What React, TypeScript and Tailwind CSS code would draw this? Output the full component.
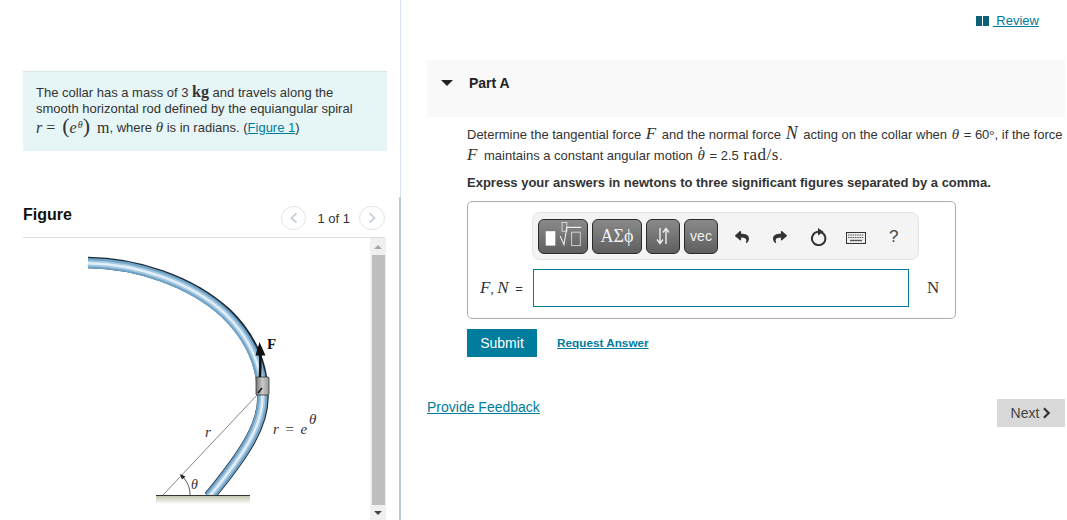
import React from 'react'
import { FaReply, FaShare } from 'react-icons/fa'

const serif = "font-['Liberation_Serif',serif]"

const Th = () => <i className={`${serif} text-[15px] mx-[1px]`}>θ</i>

const Collar = () => (
  <svg viewBox="23 238 347 282" width="347" height="282" className="block shrink-0">
    <defs>
      <clipPath id="rodClip">
        <rect x="80" y="240" width="220" height="255" />
      </clipPath>
      <linearGradient id="collarFill" x1="0" y1="0" x2="1" y2="0">
        <stop offset="0" stopColor="#777" />
        <stop offset="0.5" stopColor="#c9c9c9" />
        <stop offset="1" stopColor="#999" />
      </linearGradient>
      <linearGradient id="groundFill" x1="0" y1="0" x2="0" y2="1">
        <stop offset="0" stopColor="#c3c7ae" />
        <stop offset="1" stopColor="#ffffff" />
      </linearGradient>
    </defs>
    <rect x="156" y="496" width="94" height="8" fill="url(#groundFill)" />
    <g clipPath="url(#rodClip)" fill="none">
      <path d="M88 262.5C135 263 190 280 226 313C250 336 263 365 263 397C263 425 246 452 209 497" stroke="#1c2a36" strokeWidth="11.5" />
      <path d="M88 263.2C135 263.7 190 281 225.5 314C249 337 262.5 366 262.5 397C262.5 425 246 452 209 497" stroke="#6fa3c8" strokeWidth="10.2" />
      <path d="M88 263.2C135 263.7 190 281 225.5 314C249 337 262.5 366 262.5 397C262.5 425 246 452 209 497" stroke="#a5c8e0" strokeWidth="6" />
      <path d="M88 263.2C135 263.7 190 281 225.5 314C249 337 262.5 366 262.5 397C262.5 425 246 452 209 497" stroke="#e2eff8" strokeWidth="2.4" />
    </g>
    <line x1="163" y1="495" x2="259" y2="393" stroke="#666" strokeWidth="0.8" />
    <line x1="156" y1="495.5" x2="250" y2="495.5" stroke="#333" strokeWidth="1.2" />
    <rect x="256" y="377" width="13" height="18" rx="1" fill="url(#collarFill)" stroke="#333" strokeWidth="0.8" />
    <line x1="258" y1="393" x2="262" y2="388" stroke="#111" strokeWidth="1.5" />
    <path d="M260 377L260.5 355" stroke="#111" strokeWidth="2.6" />
    <path d="M259.5 342L265.5 355.5L255.5 355.5Z" fill="#111" />
    <path d="M190 495C190 487 187 481 182 476" fill="none" stroke="#333" strokeWidth="0.8" />
    <path d="M180 474L185.5 476.5L182 479.5Z" fill="#222" />
    <text x="267" y="349" fontFamily="Liberation Serif" fontWeight="700" fontSize="15" fill="#111">F</text>
    <text x="205" y="437" fontFamily="Liberation Serif" fontStyle="italic" fontSize="15" fill="#333">r</text>
    <text x="273" y="434" fontFamily="Liberation Serif" fontStyle="italic" fontSize="15" fill="#333" xmlSpace="preserve" letterSpacing="1">r = e</text>
    <text x="309" y="424" fontFamily="Liberation Serif" fontStyle="italic" fontSize="15" fill="#333">θ</text>
    <text x="191" y="489" fontFamily="Liberation Serif" fontStyle="italic" fontSize="14" fill="#333">θ</text>
  </svg>
)

const Chevron = ({ dir }: { dir: 'left' | 'right' }) => (
  <svg viewBox="0 0 12 14" width="10" height="12" fill="none" stroke="#c0ccd8" strokeWidth="2">
    <path d={dir === 'left' ? 'M9 1.5L3 7l6 5.5' : 'M3 1.5L9 7l-6 5.5'} />
  </svg>
)

const ToolButton = ({ className, children }: { className: string; children: React.ReactNode }) => (
  <div className={`h-[35px] flex items-center justify-center rounded-[6px] border border-[#2a2a2a] bg-gradient-to-b from-[#8a8a8a] to-[#5f5f5f] text-[#f1f1f1] ${className}`}>
    {children}
  </div>
)

const Toolbar = () => (
  <div className="ml-[64px] w-[387px] h-[48px] flex items-center pl-[5px] rounded-[8px] border border-[#e4e4e4] bg-[#f4f4f4]">
    <ToolButton className="w-[50px] mr-[4px]">
      <svg viewBox="0 0 50 34" width="50" height="34" fill="none">
        <rect x="7" y="12" width="10" height="15" fill="#fff" />
        <rect x="24" y="3" width="5" height="9" stroke="#ddd" strokeWidth="0.9" />
        <path d="M22 17l4 9 3-18h15" stroke="#eee" strokeWidth="1.1" />
        <rect x="34" y="13" width="9" height="14" stroke="#ddd" strokeWidth="0.9" />
      </svg>
    </ToolButton>
    <ToolButton className={`w-[50px] mr-[4px] text-[18px] ${serif}`}>ΑΣϕ</ToolButton>
    <ToolButton className="w-[34px] mr-[4px]">
      <svg viewBox="0 0 14 18" width="14" height="18" fill="none" stroke="#eee" strokeWidth="1.4">
        <path d="M4 1v15M1 12.5L4 16.5L7 12.5" />
        <path d="M10 17V2M7 5.5L10 1.5L13 5.5" />
      </svg>
    </ToolButton>
    <ToolButton className="w-[34px] text-[14px]">vec</ToolButton>
    <div className="flex items-center ml-[17px] text-[#333] pt-[2px]">
      <FaReply size={14} className="mr-[24px]" />
      <FaShare size={14} className="mr-[23px]" />
      <svg viewBox="0 0 18 18" width="18" height="18" fill="none" className="mr-[18px]">
        <path d="M11.5 4.4A6.7 6.7 0 1 1 8 3.8" stroke="#333" strokeWidth="2" />
        <path d="M8 0L13.5 3.8L8 7.5Z" fill="#333" />
      </svg>
      <svg viewBox="0 0 20 12" width="20" height="12" className="mr-[23px] mt-[2px]">
        <rect x="0.5" y="0.5" width="19" height="11" fill="#eee" stroke="#333" />
        <path d="M2 3h16M2 5.5h16" stroke="#555" strokeWidth="1.2" strokeDasharray="1.5 0.8" />
        <path d="M4 8.5h12" stroke="#555" strokeWidth="1.4" />
      </svg>
      <span className="text-[17px] text-[#444]">?</span>
    </div>
  </div>
)

const App = () => {
  return (
    <div className="w-[1067px] h-[520px] overflow-hidden flex bg-white text-[#333] font-['Liberation_Sans',sans-serif] text-[13px]">
      <div className="w-[401px] h-full shrink-0 flex flex-col">
        <div className="h-[197px] border-r border-[#d7e2ec] pt-[71px] pl-[23px] pr-[13px]">
          <div className="h-[80px] border-t border-[#d9e6e8] bg-[#e6f5f6] pl-[13px] pt-[12px] leading-[16px]">
            <div>The collar has a mass of 3 <span className={`${serif} text-[16px] font-bold`}>kg</span> and travels along the</div>
            <div>smooth horizontal rod defined by the equiangular spiral</div>
            <div className="h-[20px] flex items-center whitespace-pre">
              <span className={`${serif} text-[16px]`}>
                <i>r</i> = <span className="ml-[3px] text-[22px] leading-[16px]">(</span>
                <i>e</i>
                <sup className="ml-[1px] text-[10px]"><i>θ</i></sup>
                <span className="text-[22px] leading-[16px]">)</span>
                <span className="ml-[7px]">m</span>
              </span>
              <span>, where <i className={`${serif} text-[15px]`}>θ</i> is in radians. (<a href="#" className="text-[#007c9c] underline">Figure 1</a>)</span>
            </div>
          </div>
        </div>
        <div className="flex-1 min-h-0 border-r-2 border-[#b6cadd] pl-[23px] pr-[13px]">
          <div className="h-[41px] mr-[1px] border-b border-[#dddddd] flex items-center pt-[1px]">
            <h2 className="text-[16px] font-bold text-[#111] -mt-[6px]">Figure</h2>
            <div className="ml-auto flex items-center">
              <button className="w-[25px] h-[24px] rounded-full border border-[#e4e4e4] flex items-center justify-center"><Chevron dir="left" /></button>
              <span className="ml-[11px] mr-[9px] pt-[3px] text-[#333]">1 of 1</span>
              <button className="w-[26px] h-[24px] rounded-full border border-[#e4e4e4] flex items-center justify-center"><Chevron dir="right" /></button>
            </div>
          </div>
          <div className="flex">
            <Collar />
            <div className="w-[16px] h-[282px] bg-[#f0f0f0] flex flex-col items-center">
              <div className="h-[17px] flex items-center"><div className="border-x-[4px] border-x-transparent border-b-[4px] border-b-[#a8a8a8]" /></div>
              <div className="w-[13px] h-[250px] bg-[#bebebe]" />
              <div className="h-[15px] flex items-center"><div className="border-x-[4px] border-x-transparent border-t-[4px] border-t-[#444]" /></div>
            </div>
          </div>
        </div>
      </div>

      <div className="flex-1 min-w-0 pl-[26px] pr-[2px]">
        <div className="h-[60px] pt-[13px] pr-[26px] flex justify-end">
          <a href="#" className="h-[16px] flex items-center text-[#007c9c] text-[13px]">
            <svg viewBox="0 0 13 10" width="13" height="10" className="mr-[4px]"><path d="M0 0h6v10H0zM7 0h6v10H7z" fill="#0b6078" /></svg>
            <span className="underline whitespace-pre"> Review</span>
          </a>
        </div>
        <div className="h-[57px] bg-[#f9f9f9] flex pt-[15px]">
          <div className="ml-[14px] mt-[5px] h-0 border-x-[6px] border-x-transparent border-t-[6px] border-t-[#222]" />
          <h3 className="ml-[16px] text-[14px] font-bold text-[#222] leading-[16px]">Part A</h3>
        </div>
        <div className="pl-[40px] pt-[6px]">
          <div className="h-[21px] leading-[21px] whitespace-nowrap">
            Determine the tangential force <i className={`${serif} text-[17px] ml-[1px] mr-[2px]`}>F</i> and the normal force <i className={`${serif} text-[18px] ml-[1px] mr-[2px]`}>N</i> acting on the collar when <Th /> = 60<span className={serif}>°</span>, if the force
          </div>
          <div className="h-[21px] leading-[21px] whitespace-nowrap">
            <i className={`${serif} text-[17px] mr-[3px]`}>F</i> maintains a constant angular motion <span className="relative"><Th /><span className="absolute left-[4px] -top-[1px] w-[2px] h-[2px] rounded-full bg-[#333]" /></span> = 2.5 <span className={`${serif} text-[17px] tracking-[0.5px] ml-[1px]`}>rad/s</span>.
          </div>
          <p className="mt-[10px] font-bold leading-[16px] text-[#333]">Express your answers in newtons to three significant figures separated by a comma.</p>
          <div className="mt-[10px] w-[489px] h-[118px] border border-[#aaaaaa] rounded-[5px] pt-[10px]">
            <Toolbar />
            <div className="flex items-center mt-[9px]">
              <div className="w-[65px] pl-[12px] whitespace-pre"><i className={`${serif} text-[17px]`}>F</i><span className={serif}>,</span> <i className={`${serif} text-[17px] mr-[3px]`}>N</i> =</div>
              <div className="w-[376px] h-[38px] border border-[#007c9c] bg-white" />
              <span className={`ml-[18px] ${serif} text-[17px] text-[#333]`}>N</span>
            </div>
          </div>
          <div className="flex items-center mt-[10px]">
            <button className="w-[70px] h-[28px] bg-[#007c9c] text-white text-[14px]">Submit</button>
            <a href="#" className="ml-[20px] text-[#007c9c] underline font-bold text-[11.75px]">Request Answer</a>
          </div>
        </div>
        <div className="flex mt-[42px]">
          <a href="#" className="text-[#007c9c] underline text-[14px] leading-[16px] h-[16px]">Provide Feedback</a>
          <button className="ml-auto w-[68px] h-[28px] bg-[#d9d9d9] flex items-center justify-center text-[14px] text-[#444]">
            Next
            <svg viewBox="0 0 10 14" width="9" height="12" fill="none" stroke="#333" strokeWidth="2.6" className="ml-[3px]"><path d="M2 1.5L7.5 7L2 12.5" /></svg>
          </button>
        </div>
      </div>
    </div>
  )
}

export default App
